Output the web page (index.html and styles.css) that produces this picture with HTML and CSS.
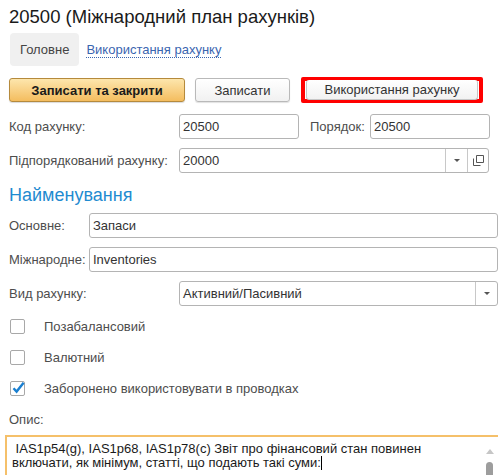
FILE: index.html
```html
<!DOCTYPE html>
<html lang="uk">
<head>
<meta charset="utf-8">
<link rel="stylesheet" href="styles.css">
</head>
<body>
<div class="page">
  <h1 class="title">20500 (Міжнародний план рахунків)</h1>
  <div class="tabs">
    <span class="tab active">Головне</span>
    <a class="tab link">Використання рахунку</a>
  </div>
  <div class="toolbar">
    <button class="btn primary">Записати та закрити</button>
    <button class="btn plain">Записати</button>
    <span class="highlight"><button class="btn usage">Використання рахунку</button></span>
  </div>
  <div class="row r-code">
    <span class="label wide">Код рахунку:</span>
    <span class="field short">20500</span>
    <span class="label order">Порядок:</span>
    <span class="field short">20500</span>
  </div>
  <div class="row r-parent">
    <span class="label wide">Підпорядкований рахунку:</span>
    <span class="field combo parent">
      <span class="value">20000</span>
      <span class="cbtn"><span class="tri"></span></span>
      <span class="cbtn open">
        <svg width="11" height="11" viewBox="0 0 11 11"><path d="M3.5 0.5h7v7h-7z M0.5 3.5v7h7" fill="none" stroke="#555" stroke-width="1"/></svg>
      </span>
    </span>
  </div>
  <h2 class="section">Найменування</h2>
  <div class="row r-name">
    <span class="label short">Основне:</span>
    <span class="field grow">Запаси</span>
  </div>
  <div class="row r-intl">
    <span class="label short">Міжнародне:</span>
    <span class="field grow">Inventories</span>
  </div>
  <div class="row r-kind">
    <span class="label wide">Вид рахунку:</span>
    <span class="field combo grow">
      <span class="value">Активний/Пасивний</span>
      <span class="cbtn last"><span class="tri"></span></span>
    </span>
  </div>
  <div class="check first"><span class="box"></span><span class="ctext">Позабалансовий</span></div>
  <div class="check"><span class="box"></span><span class="ctext">Валютний</span></div>
  <div class="check"><span class="box">
    <svg width="14" height="14" viewBox="0 0 14 14"><path d="M2.5 7.2 L5.6 10.6 L12.6 1.8" fill="none" stroke="#1a7fd0" stroke-width="2.4"/></svg>
  </span><span class="ctext">Заборонено використовувати в проводках</span></div>
  <div class="desc-label">Опис:</div>
  <div class="textarea">
    <div class="text">&nbsp;IAS1p54(g), IAS1p68, IAS1p78(c) Звіт про фінансовий стан повинен включати, як мінімум, статті, що подають такі суми:<span class="caret"></span></div>
    <div class="scroll"><span class="up"></span><span class="thumb"></span></div>
  </div>
</div>
</body>
</html>
```
FILE: styles.css
```css
html, body { margin: 0; padding: 0; background: #fff; }
body { font-family: "Liberation Sans", Arial, sans-serif; font-size: 13px; color: #4d4d4d; width: 499px; height: 475px; overflow: hidden; }
.page { padding: 0 1px 0 9px; height: 475px; overflow: hidden; box-sizing: border-box; }
.title { margin: 0; padding-top: 5px; font-size: 18.5px; font-weight: normal; color: #1a1a1a; line-height: 24px; height: 24px; }
.tabs { display: flex; align-items: center; margin-top: 4px; margin-left: 1px; height: 33px; }
.tab { font-size: 13px; }
.tab.active { background: #f0f0f0; border-radius: 4px; padding: 0 10px; height: 33px; line-height: 33px; color: #444; }
.tab.link { margin-left: 7px; color: #3a65b0; border-bottom: 1px dotted #3a65b0; line-height: 15px; }
.toolbar { display: flex; align-items: center; margin-top: 11px; height: 26px; }
.btn { font-family: inherit; font-size: 13px; height: 24px; border-radius: 3px; padding: 0; cursor: default; }
.btn.primary { width: 176px; font-weight: bold; color: #1a1a1a; border: 1px solid #b58a3c; background: linear-gradient(#fde6ad, #f4bd5f); box-shadow: 0 1px 1px rgba(0,0,0,.15); }
.btn.plain { width: 95px; margin-left: 10px; color: #333; border: 1px solid #b9b9b9; background: linear-gradient(#fff, #f1f1f1); box-shadow: 0 1px 1px rgba(0,0,0,.12); }
.highlight { display: flex; margin-left: 11px; border: 4px solid #f00; border-radius: 2px; padding: 0 1px; height: 18px; align-items: center; }
.btn.usage { width: 172px; height: 20px; color: #333; border: 1px solid #c6c6c6; border-top: none; background: linear-gradient(#fff, #f2f2f2); }
.row { display: flex; align-items: center; height: 25px; }
.r-code { margin-top: 11px; }
.r-parent { margin-top: 9px; }
.label.wide { width: 170px; flex: none; }
.label.short { width: 80px; flex: none; }
.label.order { margin-left: 11px; width: 60px; flex: none; }
.field { box-sizing: border-box; height: 25px; border: 1px solid #b4b4b4; border-radius: 3px; padding: 0 3px; line-height: 23px; color: #333; background: #fff; }
.field.short { width: 120px; }
.field.grow { flex: 1; }
.field.parent { width: 310px; }
.combo { display: flex; padding-right: 0; }
.combo .value { flex: 1; }
.cbtn { width: 21px; border-left: 1px solid #c8c8c8; display: flex; align-items: center; justify-content: center; }
.cbtn.open { width: 20px; }
.tri { width: 0; height: 0; border-left: 3px solid transparent; border-right: 3px solid transparent; border-top: 3px solid #555; }
.section { margin: 11px 0 0; font-size: 18px; font-weight: normal; color: #1f8bd0; line-height: 22px; height: 22px; }
.r-name { margin-top: 7px; height: 25px; }
.r-intl { margin-top: 9px; }
.r-kind { margin-top: 9px; }
.check { display: flex; align-items: center; height: 15px; margin-top: 16px; margin-left: 1px; }
.check.first { margin-top: 13px; }
.box { box-sizing: border-box; width: 15px; height: 15px; border: 1px solid #a8a8a8; border-radius: 2px; position: relative; }
.box svg { position: absolute; left: 0; top: -1px; }
.ctext { margin-left: 19px; color: #4d4d4d; }
.desc-label { margin-top: 16px; line-height: 16px; }
.textarea { position: relative; margin: 7px 0 0 -4px; border: 2px solid #f5c06a; border-right: none; border-bottom: none; height: 36px; padding: 5px 18px 0 5px; color: #1a1a1a; line-height: 14px; overflow: hidden; }
.caret { display: inline-block; width: 1px; height: 14px; background: #000; vertical-align: top; }
.scroll { position: absolute; right: 5px; top: 12px; width: 7px; display: flex; flex-direction: column; align-items: center; }
.up { width: 0; height: 0; border-left: 4px solid transparent; border-right: 4px solid transparent; border-bottom: 5px solid #c6c6c6; }
.thumb { margin-top: 8px; width: 7px; height: 20px; border-radius: 4px; background: #9d9d9d; }
```
